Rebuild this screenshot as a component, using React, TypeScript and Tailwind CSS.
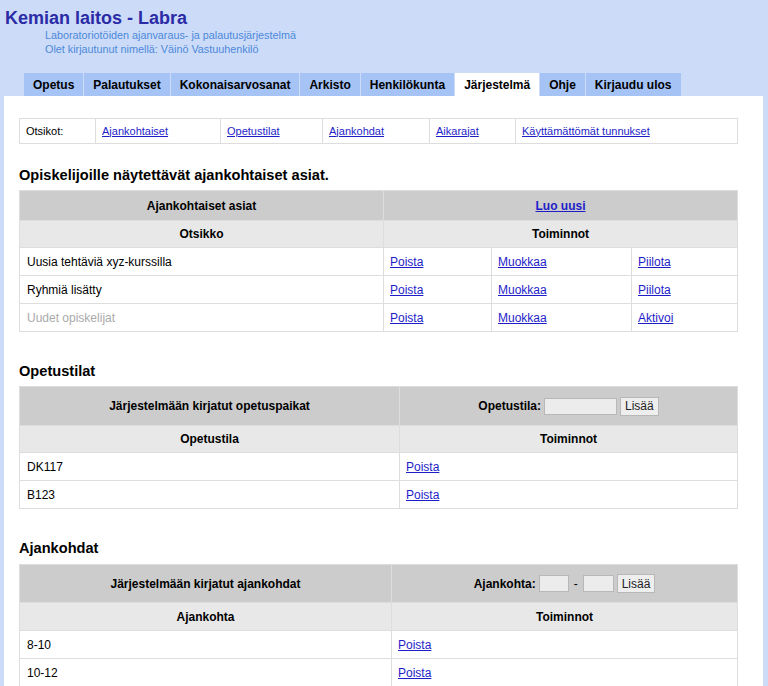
const tabs = [
  "Opetus",
  "Palautukset",
  "Kokonaisarvosanat",
  "Arkisto",
  "Henkilökunta",
  "Järjestelmä",
  "Ohje",
  "Kirjaudu ulos",
];

const anchors = [
  { label: "Ajankohtaiset", w: "w-[125px]" },
  { label: "Opetustilat", w: "w-[102px]" },
  { label: "Ajankohdat", w: "w-[107px]" },
  { label: "Aikarajat", w: "w-[86px]" },
  { label: "Käyttämättömät tunnukset", w: "" },
];

const news = [
  { title: "Uusia tehtäviä xyz-kurssilla", toggle: "Piilota", hidden: false },
  { title: "Ryhmiä lisätty", toggle: "Piilota", hidden: false },
  { title: "Uudet opiskelijat", toggle: "Aktivoi", hidden: true },
];

const rooms = ["DK117", "B123"];
const times = ["8-10", "10-12"];

function Link({ children }: { children: React.ReactNode }) {
  return (
    <a href="#" className="text-[#1e1ec8] underline">
      {children}
    </a>
  );
}

function AddButton() {
  return (
    <button className="h-[19px] border border-[#b8b8b8] bg-[#eeeeee] px-[4px] text-[12px] font-normal leading-none text-[#222]">
      Lisää
    </button>
  );
}

export default function App() {
  return (
    <div className="min-h-screen bg-[#ccdcf8] font-['Liberation_Sans',Arial,sans-serif] text-[12px] text-black">
      {/* Otsikko */}
      <div className="h-[73px] pl-[5px] pt-[8px]">
        <h1 className="text-[18px] font-bold leading-[20px] text-[#2b2ba6]">Kemian laitos - Labra</h1>
        <div className="pl-[40px] text-[10.8px] leading-[14px] text-[#4d88d8]">
          <p>Laboratoriotöiden ajanvaraus- ja palautusjärjestelmä</p>
          <p>Olet kirjautunut nimellä: Väinö Vastuuhenkilö</p>
        </div>
      </div>

      {/* Välilehdet */}
      <ul className="flex h-[23px] gap-px pl-[24px]">
        {tabs.map((t) => (
          <li
            key={t}
            className={
              "flex items-center px-[9px] text-[12px] font-bold " +
              (t === "Järjestelmä" ? "bg-white" : "bg-[#a5c3f5]")
            }
          >
            {t}
          </li>
        ))}
      </ul>

      <div className="ml-[4px] mr-[5px] bg-white pb-[20px] pl-[15px] pr-[24px] pt-[22px]">
        {/* Pikalinkit */}
        <table className="w-[719px] table-fixed border-collapse border border-[#dddddd] text-[11px]">
          <tbody>
            <tr className="h-[25px]">
              <td className="w-[76px] border border-[#dddddd] pl-[6px]">Otsikot:</td>
              {anchors.map((a) => (
                <td key={a.label} className={"border border-[#dddddd] pl-[6px] " + a.w}>
                  <Link>{a.label}</Link>
                </td>
              ))}
            </tr>
          </tbody>
        </table>

        {/* Ajankohtaiset */}
        <h2 className="mt-[22px] text-[14.6px] font-bold leading-[18px]">Opiskelijoille näytettävät ajankohtaiset asiat.</h2>
        <table className="mt-[6px] w-[719px] table-fixed border-collapse border border-[#b4b4b4]">
          <colgroup>
            <col className="w-[364px]" />
            <col className="w-[108px]" />
            <col className="w-[140px]" />
            <col />
          </colgroup>
          <tbody>
            <tr className="h-[30px] bg-[#cccccc] font-bold">
              <td className="border border-[#dddddd] text-center">Ajankohtaiset asiat</td>
              <td colSpan={3} className="border border-[#dddddd] text-center">
                <Link>Luo uusi</Link>
              </td>
            </tr>
            <tr className="h-[27px] bg-[#e8e8e8] font-bold">
              <td className="border border-[#dddddd] text-center">Otsikko</td>
              <td colSpan={3} className="border border-[#dddddd] text-center">Toiminnot</td>
            </tr>
            {news.map((n) => (
              <tr key={n.title} className="h-[28px]">
                <td className={"border border-[#dddddd] pl-[7px] " + (n.hidden ? "text-[#aaaaaa]" : "")}>{n.title}</td>
                <td className="border border-[#dddddd] pl-[6px]">
                  <Link>Poista</Link>
                </td>
                <td className="border border-[#dddddd] pl-[6px]">
                  <Link>Muokkaa</Link>
                </td>
                <td className="border border-[#dddddd] pl-[6px]">
                  <Link>{n.toggle}</Link>
                </td>
              </tr>
            ))}
          </tbody>
        </table>

        {/* Opetustilat */}
        <h2 className="mt-[30px] text-[14.6px] font-bold leading-[18px]">Opetustilat</h2>
        <table className="mt-[6px] w-[719px] table-fixed border-collapse border border-[#b4b4b4]">
          <colgroup>
            <col className="w-[380px]" />
            <col />
          </colgroup>
          <tbody>
            <tr className="h-[39px] bg-[#cccccc] font-bold">
              <td className="border border-[#dddddd] text-center">Järjestelmään kirjatut opetuspaikat</td>
              <td className="border border-[#dddddd] text-center">
                <span className="inline-flex items-center gap-[3px]">
                  Opetustila:
                  <input className="h-[17px] w-[73px] border border-[#b8b8b8] bg-[#ececec]" />
                  <AddButton />
                </span>
              </td>
            </tr>
            <tr className="h-[27px] bg-[#e8e8e8] font-bold">
              <td className="border border-[#dddddd] text-center">Opetustila</td>
              <td className="border border-[#dddddd] text-center">Toiminnot</td>
            </tr>
            {rooms.map((r) => (
              <tr key={r} className="h-[28px]">
                <td className="border border-[#dddddd] pl-[7px]">{r}</td>
                <td className="border border-[#dddddd] pl-[6px]">
                  <Link>Poista</Link>
                </td>
              </tr>
            ))}
          </tbody>
        </table>

        {/* Ajankohdat */}
        <h2 className="mt-[30px] text-[14.6px] font-bold leading-[18px]">Ajankohdat</h2>
        <table className="mt-[7px] w-[719px] table-fixed border-collapse border border-[#b4b4b4]">
          <colgroup>
            <col className="w-[372px]" />
            <col />
          </colgroup>
          <tbody>
            <tr className="h-[38px] bg-[#cccccc] font-bold">
              <td className="border border-[#dddddd] text-center">Järjestelmään kirjatut ajankohdat</td>
              <td className="border border-[#dddddd] text-center">
                <span className="inline-flex items-center gap-[3px]">
                  Ajankohta:
                  <input className="h-[17px] w-[30px] border border-[#b8b8b8] bg-[#ececec]" />
                  <span className="px-[2px] font-normal">-</span>
                  <input className="h-[17px] w-[31px] border border-[#b8b8b8] bg-[#ececec]" />
                  <AddButton />
                </span>
              </td>
            </tr>
            <tr className="h-[28px] bg-[#e8e8e8] font-bold">
              <td className="border border-[#dddddd] text-center">Ajankohta</td>
              <td className="border border-[#dddddd] text-center">Toiminnot</td>
            </tr>
            {times.map((t) => (
              <tr key={t} className="h-[28px]">
                <td className="border border-[#dddddd] pl-[7px]">{t}</td>
                <td className="border border-[#dddddd] pl-[6px]">
                  <Link>Poista</Link>
                </td>
              </tr>
            ))}
          </tbody>
        </table>
      </div>
    </div>
  );
}
